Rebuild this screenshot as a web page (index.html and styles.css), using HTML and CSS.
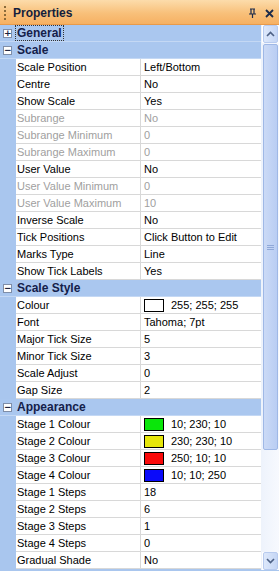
FILE: index.html
```html
<!DOCTYPE html>
<html>
<head>
<meta charset="utf-8">
<link rel="stylesheet" href="styles.css">
</head>
<body>
<div class="panel">
  <div class="title">
    <span class="grip"></span>
    <span class="title-text">Properties</span>
    <span class="title-icons">
      <svg width="9" height="10" viewBox="0 0 9 10"><path d="M2 1h5M3 1v5M6 1v5M1 6h7M4.5 6v4" stroke="#1b2a4a" stroke-width="1.2" fill="none"/></svg>
      <svg width="9" height="9" viewBox="0 0 9 9"><path d="M1 1l7 7M8 1l-7 7" stroke="#1b2a4a" stroke-width="1.8"/></svg>
    </span>
  </div>
  <div class="main">
    <div class="grid">
      <div class="cat"><span class="box">+</span><span class="cat-name focus">General</span></div>
      <div class="cat"><span class="box">−</span><span class="cat-name">Scale</span></div>
      <div class="row"><span class="name">Scale Position</span><span class="val">Left/Bottom</span></div>
      <div class="row"><span class="name">Centre</span><span class="val">No</span></div>
      <div class="row"><span class="name">Show Scale</span><span class="val">Yes</span></div>
      <div class="row dis"><span class="name">Subrange</span><span class="val">No</span></div>
      <div class="row dis"><span class="name">Subrange Minimum</span><span class="val">0</span></div>
      <div class="row dis"><span class="name">Subrange Maximum</span><span class="val">0</span></div>
      <div class="row"><span class="name">User Value</span><span class="val">No</span></div>
      <div class="row dis"><span class="name">User Value Minimum</span><span class="val">0</span></div>
      <div class="row dis"><span class="name">User Value Maximum</span><span class="val">10</span></div>
      <div class="row"><span class="name">Inverse Scale</span><span class="val">No</span></div>
      <div class="row"><span class="name">Tick Positions</span><span class="val">Click Button to Edit</span></div>
      <div class="row"><span class="name">Marks Type</span><span class="val">Line</span></div>
      <div class="row"><span class="name">Show Tick Labels</span><span class="val">Yes</span></div>
      <div class="cat"><span class="box">−</span><span class="cat-name">Scale Style</span></div>
      <div class="row"><span class="name">Colour</span><span class="val"><span class="sw" style="background:#fff"></span>255; 255; 255</span></div>
      <div class="row"><span class="name">Font</span><span class="val">Tahoma; 7pt</span></div>
      <div class="row"><span class="name">Major Tick Size</span><span class="val">5</span></div>
      <div class="row"><span class="name">Minor Tick Size</span><span class="val">3</span></div>
      <div class="row"><span class="name">Scale Adjust</span><span class="val">0</span></div>
      <div class="row"><span class="name">Gap Size</span><span class="val">2</span></div>
      <div class="cat"><span class="box">−</span><span class="cat-name">Appearance</span></div>
      <div class="row"><span class="name">Stage 1 Colour</span><span class="val"><span class="sw" style="background:#0ae60a"></span>10; 230; 10</span></div>
      <div class="row"><span class="name">Stage 2 Colour</span><span class="val"><span class="sw" style="background:#e6e60a"></span>230; 230; 10</span></div>
      <div class="row"><span class="name">Stage 3 Colour</span><span class="val"><span class="sw" style="background:#fa0a0a"></span>250; 10; 10</span></div>
      <div class="row"><span class="name">Stage 4 Colour</span><span class="val"><span class="sw" style="background:#0a0afa"></span>10; 10; 250</span></div>
      <div class="row"><span class="name">Stage 1 Steps</span><span class="val">18</span></div>
      <div class="row"><span class="name">Stage 2 Steps</span><span class="val">6</span></div>
      <div class="row"><span class="name">Stage 3 Steps</span><span class="val">1</span></div>
      <div class="row"><span class="name">Stage 4 Steps</span><span class="val">0</span></div>
      <div class="row"><span class="name">Gradual Shade</span><span class="val">No</span></div>
    </div>
    <div class="scroll">
      <div class="sbtn"><svg width="9" height="6" viewBox="0 0 9 6"><path d="M1 5l3.5-3.5L8 5" stroke="#4d6185" stroke-width="1.6" fill="none"/></svg></div>
      <div class="track">
        <div class="thumb"><span class="gl"></span><span class="gl"></span><span class="gl"></span></div>
      </div>
      <div class="sbtn"><svg width="9" height="6" viewBox="0 0 9 6"><path d="M1 1l3.5 3.5L8 1" stroke="#4d6185" stroke-width="1.6" fill="none"/></svg></div>
    </div>
  </div>
  <div class="bottom"></div>
</div>
</body>
</html>
```
FILE: styles.css
```css
html, body { margin: 0; padding: 0; }
body {
  width: 279px;
  height: 571px;
  overflow: hidden;
  font-family: "Liberation Sans", sans-serif;
  font-size: 11px;
  background: #fff;
}
.panel { display: flex; flex-direction: column; width: 279px; height: 571px; }
.title {
  height: 24px;
  flex: none;
  display: flex;
  align-items: center;
  padding-top: 2px;
  box-sizing: border-box;
  background: linear-gradient(#fcdcab, #f8c07a 55%, #f6b062);
  border-bottom: 1px solid #e89a4a;
  height: 25px;
}
.grip {
  width: 2px;
  height: 14px;
  margin-left: 4px;
  margin-right: 7px;
  background: repeating-linear-gradient(#8a6a3a 0 2px, transparent 2px 4px);
}
.title-text {
  flex: 1;
  font-weight: bold;
  font-size: 12px;
  color: #141e3c;
}
.title-icons { display: flex; gap: 8px; align-items: center; margin-right: 5px; }
.main { display: flex; flex: 1; min-height: 0; }
.grid { width: 261px; flex: none; display: flex; flex-direction: column; background: #a9c6ee; }
.row, .cat { height: 17px; display: flex; flex: none; }
.cat {
  align-items: center;
  height: 16px;
  background: #aac7ef;
  border-bottom: 1px solid #c4d8f4;
}
.box {
  width: 7px; height: 7px;
  margin: 0 4px 0 3px;
  border: 1px solid #7f8ea8;
  background: #fff;
  font-size: 9px;
  line-height: 7px;
  text-align: center;
  font-family: "DejaVu Sans", sans-serif;
  font-weight: bold;
  color: #1a2540;
}
.cat-name {
  font-weight: bold;
  font-size: 12px;
  color: #14204a;
  padding: 0 1px;
}
.focus { outline: 1px dotted #333; outline-offset: 0; }
.name {
  margin-left: 16px;
  width: 123px;
  height: 16px;
  line-height: 16px;
  padding-left: 1px;
  background: #fff;
  border-right: 1px solid #d8d8d8;
  border-bottom: 1px solid #d8d8d8;
  color: #000;
  white-space: nowrap;
  overflow: hidden;
}
.val {
  flex: 1;
  height: 16px;
  line-height: 16px;
  padding-left: 3px;
  background: #fff;
  border-bottom: 1px solid #d8d8d8;
  display: flex;
  align-items: center;
  white-space: nowrap;
}
.dis .name, .dis .val { color: #a0a0a0; }
.sw {
  width: 18px; height: 11px;
  border: 1px solid #000;
  margin-right: 7px;
  flex: none;
}
.scroll {
  width: 17px;
  flex: none;
  display: flex;
  flex-direction: column;
  background: #fff;
  border-left: 1px solid #eef3fb;
}
.sbtn {
  height: 16px;
  flex: none;
  margin: 0 1px;
  display: flex; align-items: center; justify-content: center;
  background: linear-gradient(90deg, #dde8fb, #c5d6f5);
  border: 1px solid #b8cbef;
  border-radius: 2px;
}
.track {
  flex: 1;
  display: flex;
  flex-direction: column;
  background: linear-gradient(90deg, #eef3fc, #f7f9fe);
  padding: 1px 0;
}
.thumb {
  margin: 0 1px;
  height: 404px;
  background: linear-gradient(90deg, #cbdaf6, #b9cdf3);
  border: 1px solid #9fb8e6;
  border-radius: 2px;
  display: flex;
  flex-direction: column;
  align-items: center;
  justify-content: center;
  gap: 1px;
}
.gl { width: 7px; height: 1px; background: #8fa8d8; display: block; }
.bottom { height: 1px; flex: none; background: #a9c6ee; }
```
